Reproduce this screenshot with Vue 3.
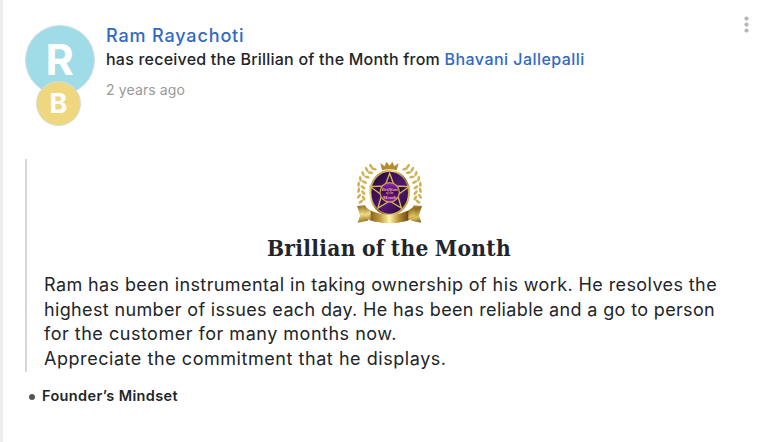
<script setup>
const lines = [
  'Ram has been instrumental in taking ownership of his work. He resolves the',
  'highest number of issues each day. He has been reliable and a go to person',
  'for the customer for many months now.',
  'Appreciate the commitment that he displays.',
]
const leaves = [
  [78, 43, -35], [87, 51, -75], [65, 52, -30], [76, 62, -80], [54, 65, -20], [66, 75, -75],
  [46, 80, -10], [58, 90, -65], [41, 97, 0], [54, 106, -55], [41, 115, 15], [55, 122, -40],
  [42, 133, 35], [56, 138, -30], [48, 149, 55],
]
</script>

<template>
  <main class="card">
    <header class="head">
      <div class="avatars">
        <span class="avatar large">R</span>
        <span class="avatar small">B</span>
      </div>
      <div class="summary">
        <div><a class="name">Ram Rayachoti</a></div>
        <p class="action">has received the Brillian of the Month from <a class="sender">Bhavani Jallepalli</a></p>
        <div><time class="time">2 years ago</time></div>
      </div>
      <svg class="more" viewBox="0 0 6 18"><circle cx="2.5" cy="2.6" r="2.1" /><circle cx="2.5" cy="8.6" r="2.1" /><circle cx="2.5" cy="14.6" r="2.1" /></svg>
    </header>
    <section class="quote">
      <svg class="badge" viewBox="-3 0 270 240">
        <defs>
          <linearGradient id="gold" x1="0" x2="1" y1="0" y2="1">
            <stop offset="0" stop-color="#8a651c" /><stop offset=".3" stop-color="#f0dc85" />
            <stop offset=".55" stop-color="#8f6a20" /><stop offset=".8" stop-color="#dfc25e" /><stop offset="1" stop-color="#705014" />
          </linearGradient>
          <linearGradient id="ribbon">
            <stop offset="0" stop-color="#8b6420" /><stop offset=".25" stop-color="#c39c40" /><stop offset=".5" stop-color="#fff6ad" />
            <stop offset=".75" stop-color="#b98d34" /><stop offset="1" stop-color="#6a4815" />
          </linearGradient>
          <linearGradient id="disc" x1="0" x2="1" y1="0" y2="1">
            <stop offset="0" stop-color="#180a20" /><stop offset=".3" stop-color="#3a1053" /><stop offset=".6" stop-color="#531775" /><stop offset="1" stop-color="#1b0926" />
          </linearGradient>
          <linearGradient id="orb" x1="0" x2="0" y1="0" y2="1">
            <stop offset="0" stop-color="#9a22d0" /><stop offset=".5" stop-color="#3d0b58" /><stop offset="1" stop-color="#8f1fc4" />
          </linearGradient>
          <g id="laurel"><ellipse v-for="(l, i) in leaves" :key="i" rx="4" ry="8.5" :transform="`translate(${l[0]} ${l[1]}) rotate(${l[2]})`" /></g>
        </defs>
        <g fill="#cfb053"><use href="#laurel" /><use href="#laurel" transform="matrix(-1 0 0 1 267 0)" /></g>
        <path d="M36 162l24-2 14 30-6 16-30 6 7-22zM231 162l-24-2-14 30 6 16 30 6-7-22z" fill="url(#gold)" />
        <ellipse cx="134" cy="122" rx="58" ry="66" fill="url(#disc)" stroke="url(#gold)" stroke-width="6" />
        <path d="M111 55l-5-22 13 10 5-14 10 12 8-12 6 14 13-10-6 22q-22-6-44 0z" fill="#b68a2e" />
        <path d="M134 64l14 38 44 2-34 25 11 39-35-21-35 21 11-39-34-25 44-2z" fill="#35104e" stroke="#d8b95e" stroke-width="4" />
        <circle cx="134" cy="121" r="29" fill="url(#orb)" stroke="#c59e45" stroke-width="4" />
        <g class="seal" text-anchor="middle"><text x="134" y="117">Brillian</text><text x="134" y="127" class="of">of the</text><text x="134" y="141">Month</text></g>
        <path d="M57 160q17 18 38 22v28q-24-3-38-18zM210 160q-17 18-38 22v28q24-3 38-18z" fill="url(#gold)" />
        <path d="M77 176q57 24 113 0v29q-56 18-113 0z" fill="url(#ribbon)" />
      </svg>
      <h1 class="title">Brillian of the Month</h1>
      <p class="message"><span v-for="(line, i) in lines" :key="i" class="line">{{ line }}</span></p>
    </section>
    <ul class="values"><li>Founder’s Mindset</li></ul>
  </main>
</template>

<style>
body { background: #fff; }
</style>

<style scoped>
* { box-sizing: border-box; }
.card { height: 442px; border-left: 3px solid #efecef; padding: 22px 21px 0 22px; font-family: Inter, sans-serif; color: #222529; }
.head { display: flex; height: 137px; }
.avatars { width: 70px; margin-top: 3px; display: flex; flex-direction: column; align-items: center; }
.avatar { display: grid; place-items: center; flex: none; border-radius: 50%; border: 1px solid #d5dddd; color: #fff; font-weight: 700; }
.large { width: 70px; height: 70px; padding: 0 1px 3px 0; background: #9fdce8; font-size: 43px; }
.small { width: 45px; height: 45px; margin: -14px 3px 0 0; padding-bottom: 1px; background: #efd780; font-size: 27px; }
.summary { margin-left: 11px; flex: 1; }
.name { font-size: 18px; line-height: 27px; font-weight: 500; letter-spacing: .86px; }
a { color: #3069c6; }
.action { margin: 0; font-size: 16px; line-height: 21px; font-weight: 500; letter-spacing: .22px; white-space: nowrap; }
.sender { letter-spacing: .46px; }
.time { font-size: 14px; line-height: 40px; letter-spacing: .13px; color: #999; }
.more { width: 6px; height: 18px; margin: -6px 1px 0 0; fill: #b9b6b6; }
.quote { border-left: 2px solid #d8d8d8; height: 213px; padding: 0 17px; display: flow-root; }
.badge { display: block; width: 90px; height: 80px; margin: -7px auto 0; }
.seal { font: italic bold 15px "Liberation Serif", serif; fill: #eeb08c; }
.of { font-size: 9px; }
.title { margin: 0; text-align: center; font: bold condensed 22.5px/32px "DejaVu Serif Condensed", "DejaVu Serif", serif; letter-spacing: .3px; word-spacing: -1.2px; }
.message { margin: 9px 0 0; font-size: 18px; line-height: 24.7px; white-space: nowrap; }
.line { display: block; letter-spacing: .4px; }
.line:nth-child(2) { letter-spacing: .35px; }
.line:nth-child(3) { letter-spacing: .51px; }
.line:nth-child(4) { letter-spacing: .55px; }
.values { list-style: none; margin: 12px 0 0; padding: 0 0 0 4px; font-size: 14.5px; line-height: 24px; font-weight: 600; letter-spacing: .36px; }
.values li { display: flex; align-items: center; gap: 7px; }
.values li::before { content: ""; width: 6px; height: 6px; margin-top: 2px; border-radius: 50%; background: #555; }
</style>
